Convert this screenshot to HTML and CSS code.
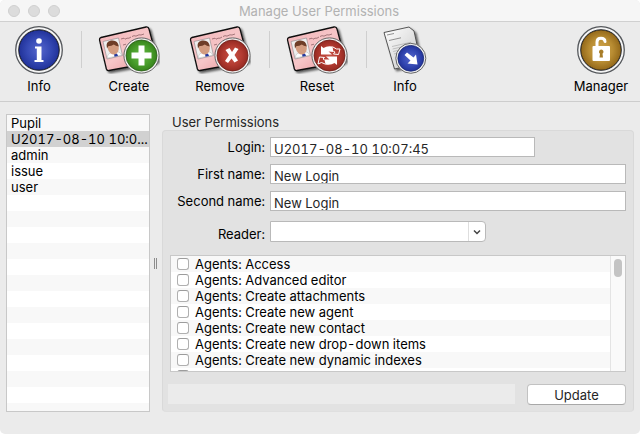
FILE: index.html
```html
<!DOCTYPE html>
<html lang="en">
<head>
  <meta charset="utf-8">
  <title>Manage User Permissions</title>
  <link rel="stylesheet" href="styles.css">
</head>
<body>
  <!-- Shared icon parts -->
  <svg class="defs" width="0" height="0" aria-hidden="true">
    <defs>
      <linearGradient id="pink" x1="0" y1="0" x2="1" y2="1">
        <stop offset="0" stop-color="#f3b3b7"/>
        <stop offset="0.5" stop-color="#f6c6c8"/>
        <stop offset="1" stop-color="#e58a90"/>
      </linearGradient>
      <linearGradient id="paper" x1="0" y1="0" x2="1" y2="1">
        <stop offset="0" stop-color="#ffffff"/>
        <stop offset="1" stop-color="#c4c4c4"/>
      </linearGradient>
      <radialGradient id="blue">
        <stop offset="0" stop-color="#5566cc"/>
        <stop offset="0.6" stop-color="#3549b4"/>
        <stop offset="1" stop-color="#22339a"/>
      </radialGradient>
      <radialGradient id="green">
        <stop offset="0" stop-color="#67b845"/>
        <stop offset="0.6" stop-color="#4a9f2c"/>
        <stop offset="1" stop-color="#37841c"/>
      </radialGradient>
      <radialGradient id="red">
        <stop offset="0" stop-color="#c65347"/>
        <stop offset="0.6" stop-color="#b33b31"/>
        <stop offset="1" stop-color="#952a22"/>
      </radialGradient>
      <radialGradient id="gold">
        <stop offset="0" stop-color="#d2a851"/>
        <stop offset="0.6" stop-color="#b88c32"/>
        <stop offset="1" stop-color="#94691a"/>
      </radialGradient>
      <filter id="shadow" x="-20%" y="-20%" width="150%" height="150%">
        <feDropShadow dx="2" dy="2" stdDeviation="1.2" flood-opacity="0.6"/>
      </filter>
      <symbol id="card" viewBox="0 0 62 48">
        <path d="M3 11.5 L48 1 Q50.500 .6 51 3 L59 33 Q59.500 35 57 36 L11 44.500 Q9 45 8.400 43 L1.500 14 Q1.200 12 3 11.500Z" fill="url(#pink)" stroke="#111" stroke-width="1.300" filter="url(#shadow)"/>
        <path d="M5 15.500 L20.500 12 L24.500 29.500 L9 33Z" fill="#eeeeee" stroke="#8d8486" stroke-width=".6"/>
        <path d="M9.500 32 Q9 27.500 14 26.500 L19 25.500 Q22.500 26 23.800 29Z" fill="#fdfdfd" stroke="#aaa" stroke-width=".4"/>
        <path d="M16 28 l3-.6 1 2.600 -3.500 .8z" fill="#2438a0"/>
        <ellipse cx="15.300" cy="22" rx="5.500" ry="6.600" transform="rotate(-12 15 22)" fill="#d39c80"/>
        <path d="M9 22.500 Q7 15.500 13 14.500 Q20 13.500 20.800 20.500 Q17.500 20 15.800 18.500 Q12.500 20.500 10.500 20Z" fill="#6e3d27"/>
        <path d="M23 13 l3-.8 1 1 2-1 2 0 2-1.200 M34 10.500 l2-.8 2 .4 3-1.300 2 .2 3-1 M25 19 l3-.8" fill="none" stroke="#9b6c70" stroke-width=".9"/>
      </symbol>
      <symbol id="ring" viewBox="0 0 48 48">
        <circle cx="24" cy="24" r="23.300" fill="#f4f4f4" stroke="#55585c" stroke-width="1.300"/>
        <circle cx="24" cy="24" r="20.300" fill="currentColor" stroke="#303236" stroke-width="1"/>
      </symbol>
    </defs>
  </svg>

  <div class="window">
    <header class="titlebar">
      <div class="lights"><span></span><span></span><span></span></div>
      <h1 class="title">Manage User Permissions</h1>
    </header>

    <nav class="toolbar">
      <button class="tool tool-round">
        <svg width="48" height="48" viewBox="0 0 48 48">
          <use href="#ring"/>
          <circle cx="24" cy="24" r="19.800" fill="url(#blue)"/>
          <circle cx="24" cy="15" r="2.800" fill="#fff"/>
          <path d="M20 20.500 H26.500 V34 H28.500 V36 H19.500 V34 H21.800 V22.500 H20Z" fill="#fff"/>
        </svg>
        <span>Info</span>
      </button>
      <span class="divider"></span>
      <button class="tool">
        <svg width="62" height="48" viewBox="0 0 62 48">
          <use href="#card"/>
          <circle cx="43.500" cy="29.500" r="17.600" fill="#efefef" stroke="#666" stroke-width="1"/>
          <circle cx="43.500" cy="29.500" r="15.500" fill="url(#green)" stroke="#2c5c1c" stroke-width=".8"/>
          <path d="M40.500 19.500 h6 v7 h7 v6 h-7 v7 h-6 v-7 h-7 v-6 h7z" fill="#fff"/>
        </svg>
        <span>Create</span>
      </button>
      <button class="tool tool-spaced">
        <svg width="62" height="48" viewBox="0 0 62 48">
          <use href="#card"/>
          <circle cx="43.500" cy="29.500" r="17.600" fill="#efefef" stroke="#666" stroke-width="1"/>
          <circle cx="43.500" cy="29.500" r="15.500" fill="url(#red)" stroke="#6e1e18" stroke-width=".8"/>
          <path d="M36.500 24 L40.500 22 L43 26 L46 21.500 L49.500 23 L45.500 29 L49 34.500 L45.500 36.500 L42.500 32.500 L39 37 L36 35 L40 29Z" fill="#fff"/>
        </svg>
        <span>Remove</span>
      </button>
      <span class="divider"></span>
      <button class="tool">
        <svg width="62" height="48" viewBox="0 0 62 48">
          <use href="#card"/>
          <circle cx="43.500" cy="29.500" r="17.600" fill="#efefef" stroke="#666" stroke-width="1"/>
          <circle cx="43.500" cy="29.500" r="15.500" fill="url(#red)" stroke="#6e1e18" stroke-width=".8"/>
          <path d="M35 28.500 V20 L37.500 22 Q41 19.500 46.500 20.500 L47.500 26 L42.500 25.500 L46 28.500Z" fill="#fff"/>
          <path d="M46.500 20.800 L50.500 23 L54 23 L52.500 28.500 L47.500 28 L49 26 L47.500 25.500" fill="none" stroke="#fff" stroke-width="1"/>
          <path d="M51 30.500 V39 L48.500 37 Q45 39.500 39.500 38.500 L38.500 33.500 L43.500 33.500 L40 30.500Z" fill="#fff"/>
          <path d="M39.500 38.200 L35.500 36.500 L32 38 L33.500 31 L38.500 31.500 L37 33 L38.500 33.800" fill="none" stroke="#fff" stroke-width="1"/>
        </svg>
        <span>Reset</span>
      </button>
      <span class="divider"></span>
      <button class="tool tool-doc">
        <svg width="44" height="48" viewBox="0 0 44 48">
          <path d="M1 6.500 L26 1 L31 5 L38 37 L11.500 43Z" fill="url(#paper)" stroke="#444" stroke-width=".9" filter="url(#shadow)"/>
          <path d="M4 9 l7-1.500 M6 14.500 l12-2.700" stroke="#777" stroke-width=".8"/>
          <path d="M9 20.500 l19-4.300 M9.600 23 l19-4.300 M10.200 25.500 l19-4.300 M11 28 l14-3.200" stroke="#b4b4b4" stroke-width=".8"/>
          <circle cx="27.800" cy="32.300" r="15" fill="#efefef" stroke="#666" stroke-width="1"/>
          <circle cx="27.800" cy="32.300" r="12.900" fill="url(#blue)" stroke="#1c2b75" stroke-width=".8"/>
          <path d="M21.500 29 L24 26.500 L30.500 31.500 L33 28.500 L34.500 38.500 L24.500 37.500 L27.500 34.500Z" fill="#fff"/>
        </svg>
        <span>Info</span>
      </button>
      <button class="tool tool-round tool-end">
        <svg width="48" height="48" viewBox="0 0 48 48">
          <use href="#ring"/>
          <circle cx="24" cy="24" r="19.800" fill="url(#gold)"/>
          <path d="M20 21 V16 Q20 12.300 24 12.300 Q27.800 12.300 28 15.500" fill="none" stroke="#fff" stroke-width="3" stroke-linecap="round"/>
          <rect x="15.500" y="20" width="17.500" height="15" rx="1" fill="#fff"/>
          <path d="M24.200 23.500 a2.300 2.300 0 0 1 1.300 4.200 L26 31.500 H22.500 L23 27.700 A2.300 2.300 0 0 1 24.200 23.500Z" fill="#a87d28"/>
        </svg>
        <span>Manager</span>
      </button>
    </nav>

    <main class="content">
      <ul class="users striped" role="listbox" aria-label="Users">
        <li role="option">Pupil</li>
        <li role="option" class="selected" aria-selected="true">U2017-08-10 10:0...</li>
        <li role="option">admin</li>
        <li role="option">issue</li>
        <li role="option">user</li>
      </ul>

      <div class="splitter"></div>

      <section class="permissions">
        <h2 class="group-title">User Permissions</h2>
        <form class="group">
          <div class="fields">
            <label for="login">Login:</label>
            <input class="short" type="text" id="login" value="U2017-08-10 10:07:45">
            <label for="first">First name:</label>
            <input type="text" id="first" value="New Login">
            <label for="second">Second name:</label>
            <input type="text" id="second" value="New Login">
            <label for="reader" class="reader-label">Reader:</label>
            <div class="combo">
              <select id="reader"><option></option></select>
              <svg class="combo-arrow" width="18" height="19" viewBox="0 0 18 19"><path d="M0.500 0V19" stroke="#dedede"/><path d="M6 8.500L9 11.500L12 8.500" fill="none" stroke="#444" stroke-width="1.500"/></svg>
            </div>
          </div>

          <div class="rights">
            <div class="rights-list striped">
              <label><input type="checkbox">Agents: Access</label>
              <label><input type="checkbox">Agents: Advanced editor</label>
              <label><input type="checkbox">Agents: Create attachments</label>
              <label><input type="checkbox">Agents: Create new agent</label>
              <label><input type="checkbox">Agents: Create new contact</label>
              <label><input type="checkbox">Agents: Create new drop-down items</label>
              <label><input type="checkbox">Agents: Create new dynamic indexes</label>
              <label><input type="checkbox"></label>
            </div>
            <div class="scrollbar"><div class="thumb"></div></div>
          </div>

          <div class="actions">
            <div class="progress"></div>
            <button type="button" class="update">Update</button>
          </div>
        </form>
      </section>
    </main>
  </div>
</body>
</html>
```
FILE: styles.css
```css
* {
  box-sizing: border-box;
}
body {
  margin: 0;
  background-color: #fff;
  font-family: Inter, "Liberation Sans", sans-serif;
  font-size: 13px;
  font-variant-numeric: tabular-nums;
  line-height: 16px;
  color: #000;
}
button, input, select {
  font: inherit;
  font-variant-numeric: inherit;
  color: inherit;
}
.defs {
  position: absolute;
}
.window {
  display: flex;
  flex-direction: column;
  height: 100vh;
  min-height: 400px;
  background-color: #ebebeb;
  border-radius: 5px;
  overflow: hidden;
}

/* Title bar */
.titlebar {
  display: grid;
  grid-template-columns: 60px 1fr 62px;
  align-items: center;
  height: 22px;
  flex: none;
  padding: 0 8px;
  background-color: #f6f6f6;
  border-bottom: 1px solid #d0d0d0;
}
.lights {
  display: flex;
  gap: 8px;
}
.lights span {
  width: 12px;
  height: 12px;
  border-radius: 50%;
  background-color: #dcdcdc;
  border: 1px solid #cfcfcf;
}
.title {
  margin: 0;
  font-size: 13px;
  font-weight: 400;
  text-align: center;
  color: #b2b2b2;
}

/* Toolbar */
.toolbar {
  display: flex;
  align-items: flex-start;
  flex: none;
  height: 80px;
  padding: 4px 15px 0;
  border-bottom: 1px solid #cdcdcd;
}
.tool {
  display: flex;
  flex-direction: column;
  align-items: center;
  gap: 4px;
  width: 62px;
  padding: 0;
  border: none;
  background: none;
}
.tool svg {
  display: block;
}
.tool-round {
  width: 48px;
}
.tool-doc {
  width: 44px;
}
.tool-spaced {
  margin-left: 29px;
}
.tool-end {
  margin-left: auto;
}
.divider {
  width: 1px;
  height: 37px;
  margin: 5px 16px 0 18px;
  background-color: #cfcfcf;
}

/* Main area */
.content {
  display: flex;
  flex: 1;
  min-height: 0;
  padding: 12px 6px 22px;
}
.striped {
  background: repeating-linear-gradient(#f8f8f8 0 16px, #fff 16px 32px);
}
.users {
  width: 144px;
  flex: none;
  margin: 0;
  padding: 0;
  list-style: none;
  border: 1px solid #c8c8c8;
  overflow: hidden;
}
.users li {
  height: 16px;
  padding: 0 4px;
  white-space: nowrap;
}
.users .selected {
  background-color: #d1d1d1;
}
.splitter {
  flex: none;
  align-self: center;
  width: 3px;
  height: 11px;
  margin: 0 5px 0 4px;
  border: solid #8c8c8c;
  border-width: 0 1px;
}
.permissions {
  display: flex;
  flex-direction: column;
  flex: 1;
  min-width: 0;
}
.group-title {
  margin: 0;
  padding-left: 10px;
  font-size: 13px;
  font-weight: 400;
  color: #262626;
}
.group {
  display: flex;
  flex-direction: column;
  flex: 1;
  min-height: 0;
  padding: 6px 7px 6px 5px;
  background-color: #e2e2e2;
  border: 1px solid #d9d9d9;
  border-bottom-color: #dfdfdf;
  border-radius: 4px;
}

/* Form fields */
.fields {
  display: grid;
  grid-template-columns: 97px 1fr;
  gap: 7px 5px;
  align-items: center;
}
.fields label {
  text-align: right;
  white-space: nowrap;
}
.fields input {
  width: 100%;
  height: 20px;
  padding: 4px 3px 0;
  border: 1px solid #b9b9b9;
  background-color: #fff;
  color: #262626;
}
.fields .short {
  width: 265px;
}
.combo {
  position: relative;
  width: 216px;
  margin-top: 3px;
}
.fields .reader-label {
  padding-top: 8px;
}
.combo select {
  display: block;
  appearance: none;
  width: 100%;
  height: 21px;
  border: 1px solid #b9b9b9;
  border-radius: 0 4px 4px 0;
  background-color: #fff;
}
.combo-arrow {
  position: absolute;
  top: 1px;
  right: 0;
  pointer-events: none;
}

/* Rights list */
.rights {
  display: flex;
  flex: 1;
  min-height: 0;
  margin: 13px 0 12px 2px;
  border: 1px solid #c8c8c8;
  overflow: hidden;
}
.rights-list {
  flex: 1;
}
.rights-list label {
  display: flex;
  align-items: center;
  gap: 6px;
  height: 16px;
  padding-left: 6px;
}
.rights-list input {
  appearance: none;
  width: 12px;
  height: 12px;
  margin: 0;
  background-color: #fff;
  border: 1px solid #b0b0b0;
  border-top-color: #9c9c9c;
  border-radius: 3px;
}
.scrollbar {
  width: 15px;
  padding: 3px 0 0 3px;
  background-color: #fafafa;
  border-left: 1px solid #e4e4e4;
}
.thumb {
  width: 8px;
  height: 18px;
  border-radius: 4px;
  background-color: #c4c4c4;
}

/* Bottom row */
.actions {
  display: flex;
  gap: 12px;
}
.progress {
  flex: 1;
  height: 20px;
  background-color: #ebebeb;
}
.update {
  width: 99px;
  height: 21px;
  padding: 0;
  background-color: #fff;
  border: 1px solid #c2c2c2;
  border-bottom-color: #a8a8a8;
  border-radius: 4px;
  color: #262626;
}
```
